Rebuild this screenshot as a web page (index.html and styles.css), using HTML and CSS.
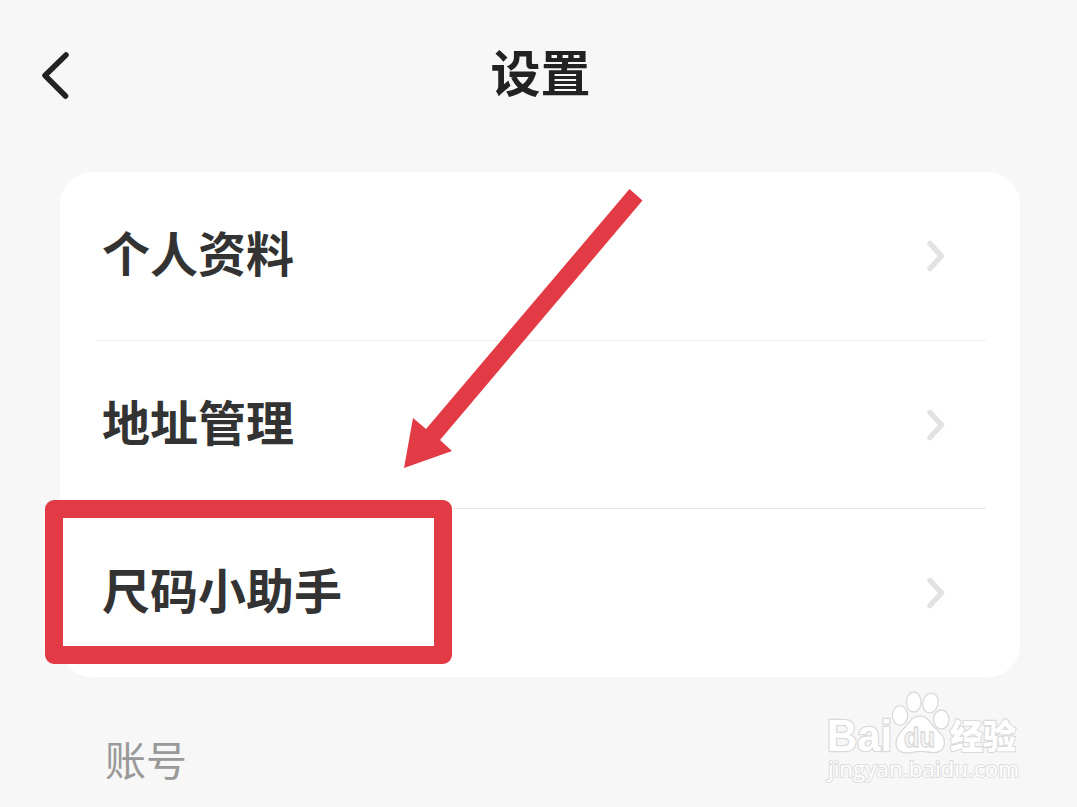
FILE: index.html
```html
<!DOCTYPE html>
<html lang="zh-CN">
  <head>
    <meta charset="UTF-8" />
    <title>设置</title>
    <link rel="stylesheet" href="styles.css">
  </head>
  <body>
    <header class="header">
      <button type="button" class="back-button" aria-label="返回">
        <svg width="32" height="50" viewBox="0 0 32 50">
          <path d="M26 5 L5 25.5 L25.5 46" />
        </svg>
      </button>
      <h1>设置</h1>
    </header>

    <!-- 设置列表 -->
    <main class="card">
      <a class="row">
        <span>个人资料</span>
        <svg class="arrow" width="20" height="32" viewBox="0 0 20 32">
          <path d="M4 3.5 L15.5 16 L4 28.5" />
        </svg>
      </a>
      <a class="row">
        <span>地址管理</span>
        <svg class="arrow" width="20" height="32" viewBox="0 0 20 32">
          <path d="M4 3.5 L15.5 16 L4 28.5" />
        </svg>
      </a>
      <a class="row">
        <span>尺码小助手</span>
        <svg class="arrow" width="20" height="32" viewBox="0 0 20 32">
          <path d="M4 3.5 L15.5 16 L4 28.5" />
        </svg>
      </a>
    </main>

    <h2 class="section-title">账号</h2>

    <!-- 标注 -->
    <div class="highlight"></div>
    <svg class="pointer" width="240" height="281" viewBox="0 0 240 281">
      <path d="M229.5 1 L242.5 12.5 L40 252 L52 263 L4 280 L13 230 L26 241 Z" />
    </svg>

    <!-- 水印 -->
    <svg class="watermark" width="210" height="100" viewBox="0 0 210 100">
      <g class="outline">
        <text class="logo" x="7" y="63" textLength="65" lengthAdjust="spacingAndGlyphs">Bai</text>
        <ellipse cx="80" cy="27.5" rx="7.7" ry="9.8" />
        <ellipse cx="93.7" cy="14" rx="7.3" ry="10" />
        <ellipse cx="110.5" cy="15" rx="7.6" ry="10" transform="rotate(14 110.5 15)" />
        <ellipse cx="121.3" cy="31.5" rx="7.7" ry="9.5" />
        <path d="M100 28 C107 28 110 34 114 39 C119 44 125 48 124.5 55 C123.5 65 115 65.5 108 64 C102 63 98 63 92 64.5 C83 66 76 64 76 55 C76 47 82 43 86 38 C90 33 93 28 100 28 Z" />
        <text class="du" x="84" y="58.5" textLength="31" lengthAdjust="spacingAndGlyphs">du</text>
        <text class="name" x="130" y="61" textLength="66" lengthAdjust="spacingAndGlyphs">经验</text>
      </g>
      <text class="url" x="8" y="89" textLength="191" lengthAdjust="spacingAndGlyphs">jingyan.baidu.com</text>
    </svg>
  </body>
</html>
```
FILE: styles.css
```css
body {
  position: relative;
  margin: 0;
  height: 807px;
  overflow: hidden;
  background: #f7f7f7;
  font-family: "Noto Sans CJK SC", sans-serif;
}

.header {
  display: grid;
  grid-template-columns: 100px 1fr 100px;
  align-items: center;
  height: 150px;
  margin-bottom: 22px;
}

.back-button {
  width: 32px;
  height: 50px;
  margin-left: 40px;
  padding: 0;
  border: none;
  background: none;
}

.back-button svg {
  display: block;
}

.back-button path {
  fill: none;
  stroke: #222;
  stroke-width: 5.5;
  stroke-linecap: round;
  stroke-linejoin: round;
}

h1 {
  margin: 0;
  padding: 0 0 10px 4px;
  color: #222;
  font-size: 50px;
  font-weight: bold;
  line-height: 74px;
  text-align: center;
}

.card {
  margin: 0 57px 0 60px;
  border-radius: 32px;
  background: white;
}

.row {
  display: flex;
  justify-content: space-between;
  align-items: center;
  box-sizing: border-box;
  height: 168px;
  margin: 0 34px 0 36px;
  padding: 0 40px 0 6px;
  color: #333;
  font-size: 48px;
  font-weight: bold;
  line-height: 70px;
}

.row span {
  padding-bottom: 10px;
}

.row + .row {
  border-top: 1px solid #efefef;
}

.row:last-child {
  height: 169px;
  border-top-color: #e6e6e6;
}

.arrow path {
  fill: none;
  stroke: #e2e2e2;
  stroke-width: 5.5;
  stroke-linecap: round;
  stroke-linejoin: round;
}

.section-title {
  margin: 51px 0 0 105px;
  color: #999;
  font-size: 41px;
  font-weight: normal;
  line-height: 60px;
}

/* 红框和箭头 */
.highlight {
  position: absolute;
  left: 45px;
  top: 500px;
  box-sizing: border-box;
  width: 407px;
  height: 164px;
  border: 18px solid #e33b46;
  border-radius: 9px;
}

.pointer {
  position: absolute;
  left: 400px;
  top: 188px;
  overflow: visible;
}

.pointer path {
  fill: #e33b46;
}

/* 水印 */
.watermark {
  position: absolute;
  left: 820px;
  top: 688px;
}

.outline {
  fill: white;
  stroke: #dadada;
  stroke-width: 1.3;
}

.logo,
.du {
  font-family: "Liberation Sans", Arial, sans-serif;
  font-weight: bold;
}

.logo {
  stroke-width: 2.6;
  paint-order: stroke;
  font-size: 44px;
}

.du {
  fill: #f7f7f7;
  font-size: 27px;
}

.name {
  stroke-width: 2.2;
  paint-order: stroke;
  font-size: 34px;
  font-weight: 900;
}

.url {
  fill: white;
  stroke: #dedede;
  stroke-width: 2;
  paint-order: stroke;
  font-family: "Open Sans", sans-serif;
  font-size: 21px;
}
```
